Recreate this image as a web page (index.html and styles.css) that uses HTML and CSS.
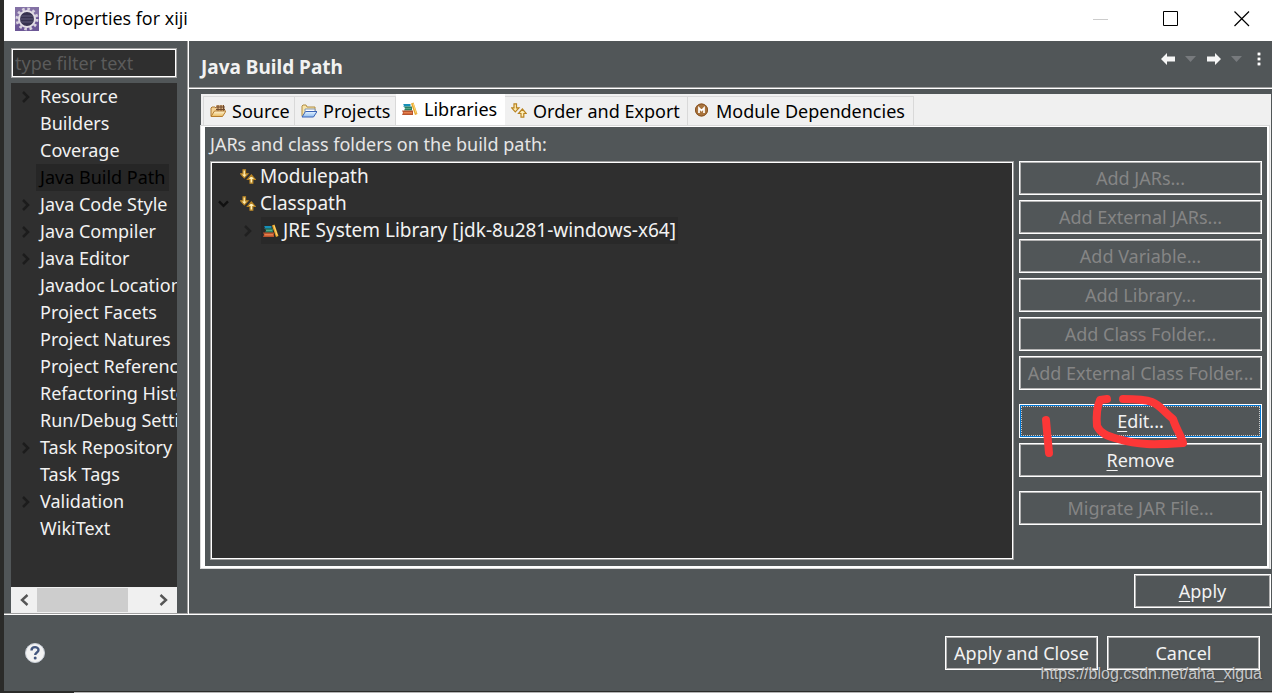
FILE: index.html
```html
<!DOCTYPE html>
<html lang="en">
<head>
<meta charset="utf-8">
<title>Properties for xiji</title>
<link rel="stylesheet" href="styles.css">
</head>
<body>
<svg class="defs" aria-hidden="true">
  <defs>
    <linearGradient id="paper" x1="0" y1="0" x2="0" y2="1"><stop offset="0" stop-color="#fff6d8"/><stop offset="1" stop-color="#e9b95c"/></linearGradient>
    <linearGradient id="sky" x1="0" y1="0" x2="0" y2="1"><stop offset="0" stop-color="#e6f3ff"/><stop offset="1" stop-color="#8ebcf0"/></linearGradient>
    <symbol id="chevron" viewBox="0 0 10 14"><path d="M2 2l5 5-5 5" fill="none" stroke="currentColor" stroke-width="2.6"/></symbol>
    <symbol id="books" viewBox="0 0 16 16">
      <path d="M1 3h7.500v2.500H1l1-1.200z" fill="#168fb8"/><path d="M2 5.500h8v4H2l1-2z" fill="#2c8064"/><path d="M3 7h6v1H3z" fill="#55a98a"/><path d="M0 9.500h11V14H0l1-2.200z" fill="#b9542d"/><path d="M1.500 11H10v1.500H1.500z" fill="#e7814e"/><path d="M9 2.500l2.500-1L15.500 13l-2.500 1z" fill="#e7a62c"/><path d="M11 2.500l3.200 10" stroke="#ffd878"/>
    </symbol>
    <symbol id="paths" viewBox="0 0 16 16">
      <path d="M3 .8h2.500v4H8L4.300 8.800.6 4.800H3z" fill="#ffedae" stroke="#b98422" stroke-width="1.200"/><path d="M10 14.200h2.800v-3.700h2.500L11.400 6l-3.900 4.500H10z" fill="#fff0b8" stroke="#b98422" stroke-width="1.200"/>
    </symbol>
  </defs>
</svg>
<div class="window">
  <header class="titlebar">
    <svg class="app-icon" viewBox="0 0 24 24" aria-hidden="true">
      <rect width="24" height="24" fill="#6c5796"/><path d="M0 0h24v10L0 18z" fill="#8371a5"/>
      <circle cx="12" cy="12" r="10" fill="none" stroke="#d8d2df" stroke-width="3" stroke-dasharray="2.600 2.636"/>
      <circle cx="12" cy="12" r="8" fill="#37324f" stroke="#e4dfe6" stroke-width="2"/><path d="M6 9h12M5 12h14M6 15h12" stroke="#615b7b"/>
    </svg>
    <h1 class="title">Properties for xiji</h1>
    <div class="window-controls">
      <button class="win-btn" aria-label="Minimize"><svg viewBox="0 0 16 16"><path d="M0 8.500h15" stroke="#ccc"/></svg></button>
      <button class="win-btn" aria-label="Maximize"><svg viewBox="0 0 16 16"><path d="M.5 .5h14v14H.5z" fill="none" stroke="#000"/></svg></button>
      <button class="win-btn" aria-label="Close"><svg viewBox="0 0 16 16"><path d="M.5 .5l14.500 14.500M15 .5L.5 15" stroke="#000" stroke-width="1.200"/></svg></button>
    </div>
  </header>
  <div class="content">
    <aside class="sidebar">
      <input class="filter" type="text" placeholder="type filter text" aria-label="Filter text">
      <ul class="nav">
        <li class="nav-item"><svg class="chev"><use href="#chevron"/></svg><span class="nav-label">Resource</span></li>
        <li class="nav-item"><span class="nav-label">Builders</span></li>
        <li class="nav-item"><span class="nav-label">Coverage</span></li>
        <li class="nav-item"><span class="nav-label nav-current">Java Build Path</span></li>
        <li class="nav-item"><svg class="chev"><use href="#chevron"/></svg><span class="nav-label">Java Code Style</span></li>
        <li class="nav-item"><svg class="chev"><use href="#chevron"/></svg><span class="nav-label">Java Compiler</span></li>
        <li class="nav-item"><svg class="chev"><use href="#chevron"/></svg><span class="nav-label">Java Editor</span></li>
        <li class="nav-item"><span class="nav-label">Javadoc Location</span></li>
        <li class="nav-item"><span class="nav-label">Project Facets</span></li>
        <li class="nav-item"><span class="nav-label">Project Natures</span></li>
        <li class="nav-item"><span class="nav-label">Project References</span></li>
        <li class="nav-item"><span class="nav-label">Refactoring History</span></li>
        <li class="nav-item"><span class="nav-label">Run/Debug Settings</span></li>
        <li class="nav-item"><svg class="chev"><use href="#chevron"/></svg><span class="nav-label">Task Repository</span></li>
        <li class="nav-item"><span class="nav-label">Task Tags</span></li>
        <li class="nav-item"><svg class="chev"><use href="#chevron"/></svg><span class="nav-label">Validation</span></li>
        <li class="nav-item"><span class="nav-label">WikiText</span></li>
      </ul>
      <div class="scrollbar">
        <button class="scroll-btn" aria-label="Scroll left"><svg viewBox="0 0 10 12"><path d="M8.500 1L3 6l5.500 5" fill="none" stroke="#555" stroke-width="2.400"/></svg></button>
        <div class="scroll-track"><div class="scroll-thumb"></div></div>
        <button class="scroll-btn" aria-label="Scroll right"><svg viewBox="0 0 10 12"><path d="M1.500 1L7 6l-5.500 5" fill="none" stroke="#555" stroke-width="2.400"/></svg></button>
      </div>
    </aside>
    <main class="main">
      <div class="page-head">
        <h2 class="page-title">Java Build Path</h2>
        <div class="history">
          <button class="tool" aria-label="Back"><svg class="arrow" viewBox="0 0 14 12"><path d="M0 6l6-6v3.500h8v5H6V12z" fill="#f6f6f6"/></svg></button>
          <button class="tool" aria-label="Back history"><svg class="drop" viewBox="0 0 12 6"><path d="M0 0h11L5.500 6z" fill="#777a7d"/></svg></button>
          <button class="tool" aria-label="Forward"><svg class="arrow" viewBox="0 0 14 12"><path d="M14 6L8 0v3.500H0v5h8V12z" fill="#f6f6f6"/></svg></button>
          <button class="tool" aria-label="Forward history"><svg class="drop" viewBox="0 0 12 6"><path d="M0 0h11L5.500 6z" fill="#777a7d"/></svg></button>
          <button class="tool tool-menu" aria-label="Menu"><svg class="dots" viewBox="0 0 4 14"><path d="M0 0h4v4H0zM0 5h4v4H0zM0 10h4v4H0z" fill="#3b3f41"/><path d="M.5 .5h3v3h-3zM.5 5.500h3v3h-3zM.5 10.500h3v3h-3z" fill="#fff"/></svg></button>
        </div>
      </div>
      <section class="tab-folder">
        <div class="tabs" role="tablist">
          <button class="tab tab-source" role="tab"><svg class="icon" viewBox="0 0 16 16"><path d="M1 13V5l1-1h3l1 1h8v3" fill="#f4d294" stroke="#a97631"/><path d="M6 2h8v6H6z" fill="#dbb486"/><path d="M6 4h9M6 6.500h9M8 2v6M11 2v6M13.500 2v6" stroke="#704a2d"/><path d="M1 13.500L4.500 8H16l-3.500 5.500z" fill="url(#paper)" stroke="#b57c2e"/></svg>Source</button>
          <button class="tab tab-projects" role="tab"><svg class="icon" viewBox="0 0 16 16"><path d="M1 13V3l1-1h3l1 2h8v4" fill="#f8e5ab" stroke="#b18d43"/><path d="M4 6h10v4H4z" fill="#fff" stroke="#8096b7"/><path d="M1 14l3.500-5.500H16L12.500 14z" fill="url(#sky)" stroke="#3a63b6"/></svg>Projects</button>
          <button class="tab tab-libraries tab-active" role="tab" aria-selected="true"><svg class="icon"><use href="#books"/></svg>Libraries</button>
          <button class="tab tab-order" role="tab"><svg class="icon"><use href="#paths"/></svg>Order and Export</button>
          <button class="tab tab-modules" role="tab"><svg class="icon" viewBox="0 0 16 16"><circle cx="7.500" cy="7" r="6.500" fill="#a9743e"/><circle cx="7.500" cy="7" r="6" fill="none" stroke="#875222"/><path d="M5 10V5l2.500 2.500L10 5v5" fill="none" stroke="#fff" stroke-width="1.700"/></svg>Module Dependencies</button>
        </div>
        <div class="panel">
          <p class="panel-label">JARs and class folders on the build path:</p>
          <div class="panel-body">
            <ul class="entries">
              <li class="entry"><svg class="icon"><use href="#paths"/></svg><span class="entry-text">Modulepath</span></li>
              <li class="entry"><svg class="chev chev-open"><use href="#chevron"/></svg><svg class="icon"><use href="#paths"/></svg><span class="entry-text">Classpath</span></li>
              <li class="entry entry-child"><svg class="chev"><use href="#chevron"/></svg><span class="entry-selected"><svg class="icon"><use href="#books"/></svg><span class="entry-text">JRE System Library [jdk-8u281-windows-x64]</span></span></li>
            </ul>
            <div class="actions">
              <button class="btn" disabled>Add JARs...</button>
              <button class="btn" disabled>Add External JARs...</button>
              <button class="btn" disabled>Add Variable...</button>
              <button class="btn" disabled>Add Library...</button>
              <button class="btn" disabled>Add Class Folder...</button>
              <button class="btn" disabled>Add External Class Folder...</button>
              <div class="edit-wrap">
                <button class="btn btn-focus"><u>E</u>dit...</button>
                <svg class="marker" viewBox="0 0 180 66" aria-hidden="true"><path d="M27 27L30 60" stroke-width="8"/><path d="M88 6l-7 1c-3 7-4 15-3 26 3 7 10 10 21 13 20 6 35 6 65 4-2-8-7-14-10-24-10-8-13-14-21-17-8-3-18-3-29-3" stroke-width="8"/></svg>
              </div>
              <button class="btn"><u>R</u>emove</button>
              <button class="btn btn-spaced" disabled>Migrate JAR File...</button>
            </div>
          </div>
        </div>
      </section>
      <div class="apply-row"><button class="btn btn-apply"><u>A</u>pply</button></div>
    </main>
  </div>
  <footer class="footer">
    <button class="help" aria-label="Help"><svg viewBox="0 0 20 20"><circle cx="10" cy="10" r="9.500" fill="#f3f3f3" stroke="#c7cdd6"/><path d="M6.500 7.500c0-4.500 7-4.300 7-.5 0 2.500-3.300 2.500-3.300 5" fill="none" stroke="#44577f" stroke-width="2.400"/><circle cx="10.200" cy="15" r="1.500" fill="#44577f"/></svg></button>
    <div class="footer-actions">
      <button class="btn">Apply and Close</button>
      <button class="btn">Cancel</button>
    </div>
    <span class="watermark">https://blog.csdn.net/aha_xigua</span>
  </footer>
</div>
</body>
</html>
```

FILE: styles.css
```css
* { box-sizing: border-box; }
body {
  margin: 0;
  background: linear-gradient(90deg, #2b2b29 74px, #b4b4b4 74px);
  font-family: "Noto Sans", "Open Sans", sans-serif;
  font-size: 18px;
  line-height: 27px;
  color: #f2f2f2;
}
button, input { font: inherit; color: inherit; }
button { background: none; border: 0; padding: 0; }
ul { list-style: none; margin: 0; padding: 0; }
svg { display: block; flex: none; }
.defs { position: absolute; width: 0; height: 0; }

.window {
  display: flex;
  flex-direction: column;
  height: calc(100vh - 1px);
  border-left: 4px solid #2b2b29;
  border-bottom: 1px solid #2b2b29;
  background: #515658;
}

.titlebar { display: flex; align-items: center; height: 41px; padding: 0 0 4px 11px; background: #fff; color: #000; overflow: hidden; }
.app-icon { width: 24px; height: 24px; }
.title { flex: 1; margin: 0 0 0 5px; font-family: "Open Sans", sans-serif; font-size: 18px; font-weight: 400; }
.window-controls { display: flex; }
.win-btn { display: flex; justify-content: center; align-items: center; width: 70px; height: 32px; }
.win-btn:last-child { width: 72px; margin-right: -6px; }
.win-btn svg { width: 16px; height: 16px; }

.content { flex: 1; min-height: 0; display: grid; grid-template-columns: 185px minmax(0, 1fr); border-bottom: 1px solid #fff; box-shadow: inset 0 -1px #a0a0a0; }

.sidebar { display: flex; flex-direction: column; min-height: 0; padding: 7px 11px 1px 7px; border-right: 1px solid #fff; box-shadow: inset -1px 0 #a0a0a0; }
.filter { width: 100%; height: 30px; margin-bottom: 5px; padding: 0 3px; background: #2f2f2f; border: 1px solid #a0a0a0; outline: 1px solid #fff; outline-offset: -2px; border-radius: 0; }
.filter::placeholder { color: #5b5b5b; opacity: 1; }
.nav { flex: 1; min-height: 0; overflow: hidden; background: #2f2f2f; }
.nav-item { position: relative; display: flex; align-items: center; height: 27px; padding-left: 25px; white-space: nowrap; }
.chev { width: 10px; height: 14px; color: #1c1c1c; }
.nav-item .chev { position: absolute; left: 10px; }
.nav-label { padding: 0 4px; }
.nav-current { background: #262626; color: #000; }
.scrollbar { display: flex; height: 26px; background: #f0f0f0; }
.scroll-btn { display: flex; align-items: center; justify-content: center; width: 26px; }
.scroll-btn svg { width: 10px; height: 12px; }
.scroll-track { flex: 1; padding-top: 1px; }
.scroll-thumb { width: 80%; height: 24px; background: #cdcdcd; }

.main { display: flex; flex-direction: column; min-height: 0; }
.page-head { display: flex; justify-content: space-between; height: 48px; padding: 12px 11px 0 12px; border-bottom: 1px solid #fff; box-shadow: inset 0 -1px #a0a0a0; }
.page-title { margin: 0; font-size: 19px; line-height: 29px; font-weight: 700; }
.history { display: flex; align-items: center; gap: 10px; height: 12px; }
.tool { display: flex; }
.tool-menu { margin-left: 4px; }
.arrow { width: 14px; height: 12px; }
.drop { width: 12px; height: 6px; }
.dots { width: 4px; height: 14px; }

.tab-folder { flex: 1; min-height: 0; display: flex; flex-direction: column; margin: 5px 1px 0 12px; background: #f0f0f0; border-right: 2px solid #f0f0f0; border-bottom: 1px solid #f0f0f0; }
.tabs { display: flex; align-items: flex-end; height: 32px; padding-left: 2px; color: #000; }
.tab { display: flex; align-items: center; gap: 6px; height: 30px; padding: 0 0 0 6px; border: 1px solid #d9d9d9; border-left: 0; white-space: nowrap; }
.tab-source { width: 92px; border-left: 1px solid #d9d9d9; }
.tab-projects { width: 101px; }
.tab-libraries { width: 109px; }
.tab-order { width: 183px; }
.tab-modules { width: 226px; }
.tab-active { height: 32px; padding-bottom: 2px; background: #fff; border-color: #fff; }
.icon { width: 16px; height: 16px; }

.panel { flex: 1; min-height: 0; display: flex; flex-direction: column; padding: 4px 5px 6px; background: #515658; border: 2px solid #fff; border-width: 1px 2px 2px 4px; outline: 1px solid #d9d9d9; outline-offset: 0; }
.panel-label { margin: 0 0 3px; color: #e6e6e6; }
.panel-body { flex: 1; min-height: 0; display: grid; grid-template-columns: minmax(0, 1fr) 243px; gap: 5px; }
.entries { background: #2f2f2f; border: 1px solid #a0a0a0; box-shadow: inset 0 0 0 1px #fff; padding: 1px; font-size: 19px; }
.entry { position: relative; display: flex; align-items: center; gap: 4px; height: 27px; padding-left: 28px; white-space: nowrap; }
.entry .chev { position: absolute; left: 7px; }
.entry .chev-open { transform: rotate(90deg); color: #111; width: 9px; }
.entry-child { padding-left: 49px; }
.entry-child .chev { left: 31px; color: #202020; }
.entry-selected { display: flex; align-items: center; gap: 4px; height: 27px; padding: 0 2px; background: #292929; }

.actions { display: flex; flex-direction: column; gap: 5px; }
.btn { height: 34px; border: 1px solid #fff; box-shadow: inset 0 0 0 1px #b4b4b4; white-space: nowrap; }
.btn:disabled { color: #858585; }
.btn u { text-underline-offset: 3px; text-decoration-thickness: 1px; }
.btn-focus { width: 100%; box-shadow: inset 0 0 0 1px #0078d7; outline: 1px dotted #ccc; outline-offset: -3px; }
.btn-spaced { margin-top: 9px; }
.edit-wrap { position: relative; height: 34px; margin-top: 9px; }
.marker { position: absolute; left: 0; top: -11px; width: 180px; height: 66px; overflow: visible; z-index: 1; fill: none; stroke: #fc3737; stroke-linecap: round; stroke-linejoin: round; pointer-events: none; }

.apply-row { display: flex; justify-content: flex-end; padding: 5px 1px 6px; }
.btn-apply { width: 137px; }

.footer { position: relative; display: flex; align-items: center; justify-content: space-between; height: 76px; padding: 0 12px 0 21px; }
.help svg { width: 20px; height: 20px; }
.footer-actions { display: grid; grid-template-columns: 153px 153px; gap: 9px; }
.watermark { position: absolute; right: 10px; bottom: 6px; font: 16px/22px "Liberation Sans", sans-serif; color: #c4c6c7; text-shadow: 1px 1px 1px #444; }
```
